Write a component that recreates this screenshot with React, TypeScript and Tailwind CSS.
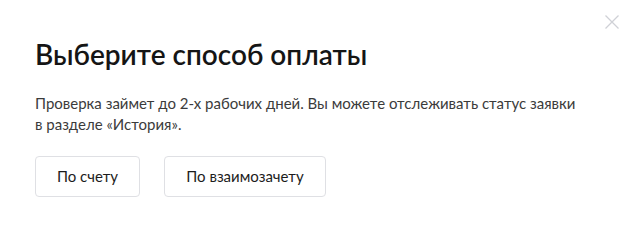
export default function App() {
  return (
    <div className="relative w-[635px] h-[225px] bg-white font-['Lato','Noto_Sans',sans-serif]">
      <button className="absolute right-[15px] top-[14px] w-[16px] h-[16px] text-[#cfd1d6]" aria-label="Закрыть">
        <svg width="16" height="16" viewBox="0 0 16 16" fill="none" stroke="currentColor" strokeWidth="1.3">
          <path d="M1.5 1.5l13 13M14.5 1.5l-13 13" />
        </svg>
      </button>
      <div className="flex flex-col pl-[35px] pt-[37px]">
        <h1 className="text-[28px] leading-[34px] font-semibold text-[#151515]">Выберите способ оплаты</h1>
        <p className="mt-[22px] text-[15px] leading-[21px] text-[#3b3b3b]">
          Проверка займет до 2-х рабочих дней. Вы можете отслеживать статус заявки
          <br />
          в разделе «История».
        </p>
        <div className="flex gap-[24px] mt-[21px]">
          <button className="h-[41px] w-[105px] rounded-[4px] border border-[#dfe0e4] text-[15px] text-[#1c1c1c]">
            По счету
          </button>
          <button className="h-[41px] w-[162px] rounded-[4px] border border-[#dfe0e4] text-[15px] text-[#1c1c1c]">
            По взаимозачету
          </button>
        </div>
      </div>
    </div>
  );
}
